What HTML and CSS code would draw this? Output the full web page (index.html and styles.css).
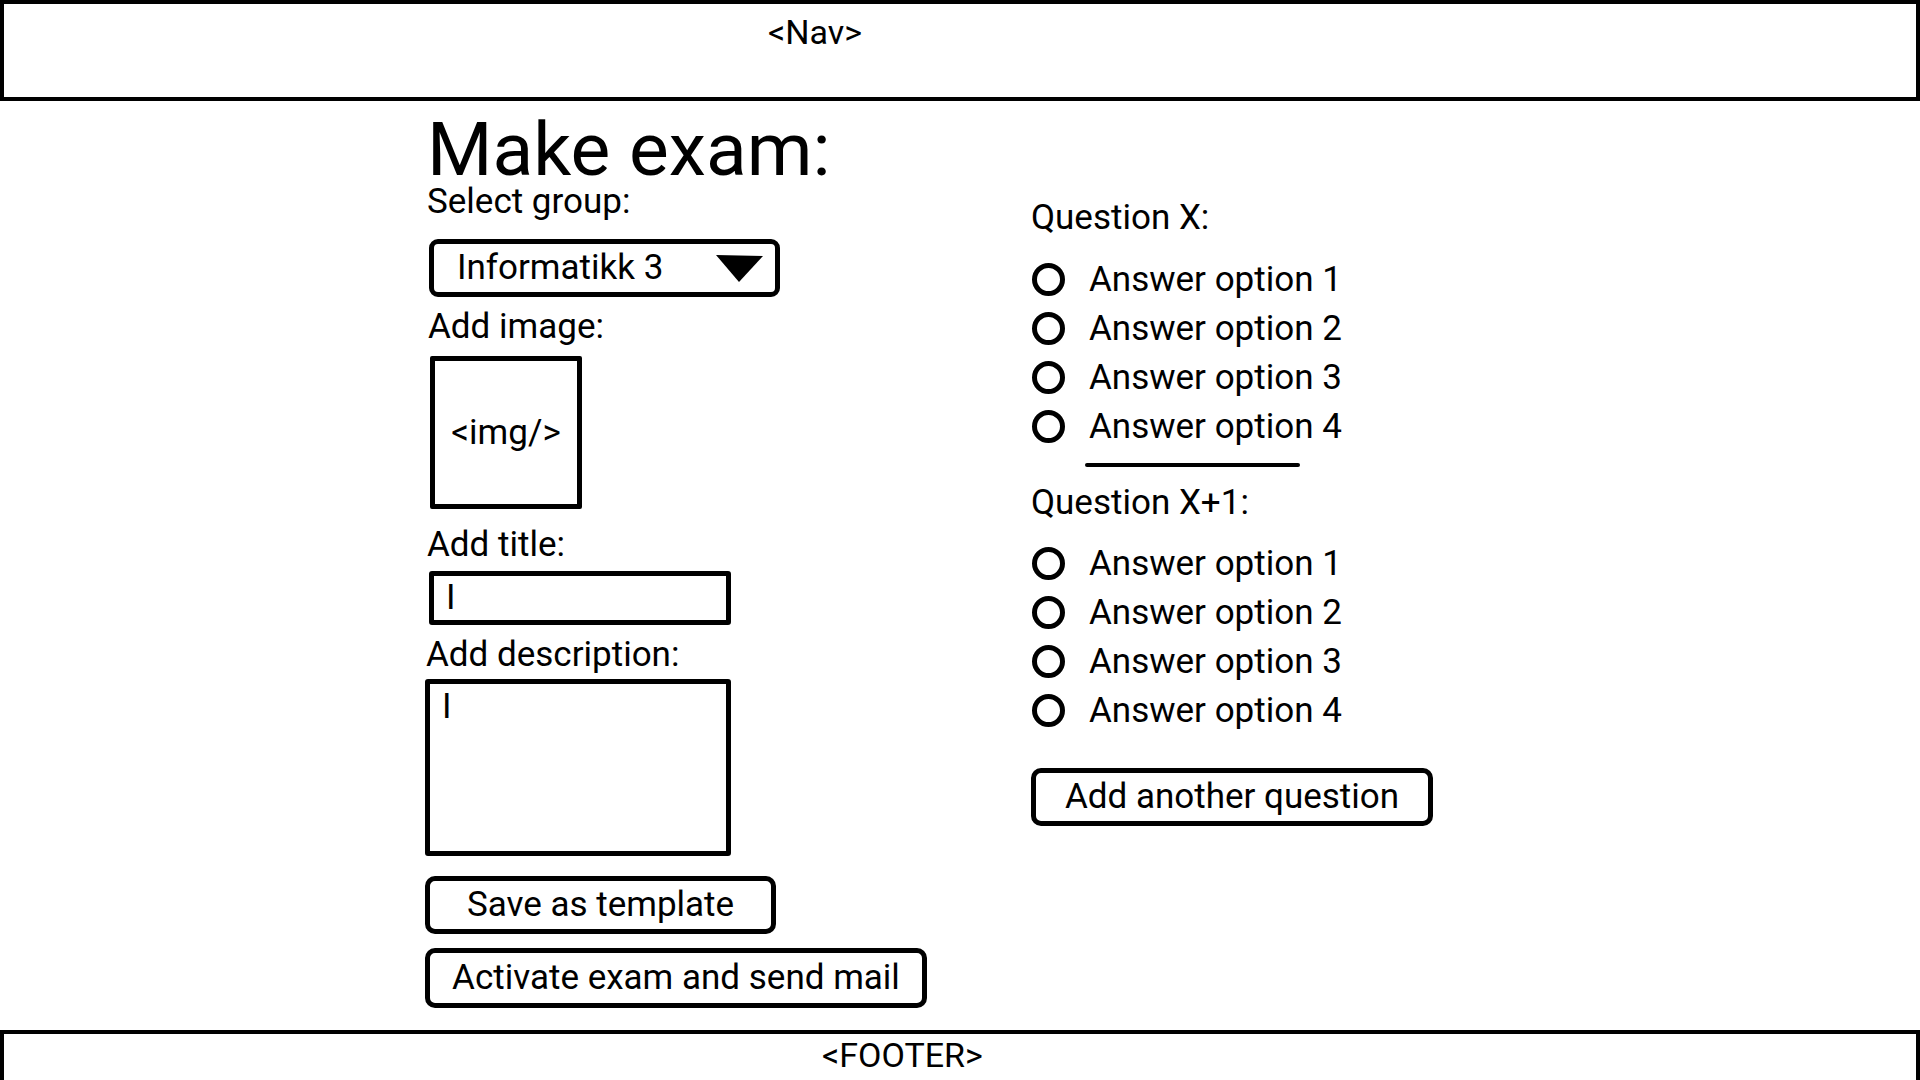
FILE: index.html
```html
<!DOCTYPE html>
<html lang="en">
<head>
<meta charset="utf-8">
<title>Make exam</title>
<link rel="stylesheet" href="styles.css">
</head>
<body>
<header class="nav"><span class="nav-label">&lt;Nav&gt;</span></header>
<main class="page">
  <section class="col-left">
    <h1 class="title">Make exam:</h1>
    <label class="label">Select group:</label>
    <div class="select">
      <span class="select-value">Informatikk 3</span>
      <svg class="caret" width="48" height="27" viewBox="0 0 48 27"><polygon points="0,0 47,1 23,27" fill="#000"/></svg>
    </div>
    <label class="label label-image">Add image:</label>
    <div class="image-box">&lt;img/&gt;</div>
    <label class="label label-title">Add title:</label>
    <div class="input"><span class="cursor">I</span></div>
    <label class="label label-desc">Add description:</label>
    <div class="textarea"><span class="cursor">I</span></div>
    <button class="btn btn-save">Save as template</button>
    <button class="btn btn-activate">Activate exam and send mail</button>
  </section>
  <section class="col-right">
    <div class="q-label">Question X:</div>
    <ul class="options">
      <li class="option"><span class="radio"></span><span>Answer option 1</span></li>
      <li class="option"><span class="radio"></span><span>Answer option 2</span></li>
      <li class="option"><span class="radio"></span><span>Answer option 3</span></li>
      <li class="option"><span class="radio"></span><span>Answer option 4</span></li>
    </ul>
    <div class="divider"></div>
    <div class="q-label q-label-next">Question X+1:</div>
    <ul class="options options-next">
      <li class="option"><span class="radio"></span><span>Answer option 1</span></li>
      <li class="option"><span class="radio"></span><span>Answer option 2</span></li>
      <li class="option"><span class="radio"></span><span>Answer option 3</span></li>
      <li class="option"><span class="radio"></span><span>Answer option 4</span></li>
    </ul>
    <button class="btn btn-add">Add another question</button>
  </section>
</main>
<footer class="footer"><span class="footer-label">&lt;FOOTER&gt;</span></footer>
</body>
</html>
```
FILE: styles.css
```css
* { box-sizing: border-box; }
html, body { margin: 0; padding: 0; background: #fff; }
body {
  font-family: Roboto, "Noto Sans", Arial, sans-serif;
  font-size: 35px;
  line-height: 34px;
  color: #000;
  overflow: hidden;
}

.nav {
  height: 101px;
  border: 4px solid #000;
  padding: 8px 0 0 764px;
  font-size: 34px;
  line-height: 40px;
}

.page {
  display: flex;
  align-items: flex-start;
  padding: 18px 0 22px 427px;
}

.col-left {
  width: 604px;
  display: flex;
  flex-direction: column;
  align-items: flex-start;
}

.title {
  margin: 0 0 6px 0;
  font-size: 75px;
  font-weight: 400;
  line-height: 60px;
  height: 60px;
}

.label { display: block; line-height: 34px; height: 34px; }
.label-image { margin-top: 13px; margin-left: 1px; }
.label-title { margin-top: 19px; }
.label-desc { margin-top: 13px; margin-left: -1px; }

.select {
  margin-top: 20px;
  margin-left: 2px;
  width: 351px;
  height: 58px;
  border: 5px solid #000;
  border-radius: 9px;
  display: flex;
  align-items: center;
  justify-content: space-between;
  padding: 0 11px 0 23px;
}
.caret { display: block; }

.image-box {
  margin-top: 12px;
  margin-left: 3px;
  width: 152px;
  height: 153px;
  border: 5px solid #000;
  border-radius: 2px;
  display: flex;
  align-items: center;
  justify-content: center;
}

.input {
  margin-top: 9px;
  margin-left: 2px;
  width: 302px;
  height: 54px;
  border: 5px solid #000;
  border-radius: 3px;
  padding: 2px 0 0 12px;
  line-height: 40px;
}

.textarea {
  margin-top: 7px;
  margin-left: -2px;
  width: 306px;
  height: 177px;
  border: 5px solid #000;
  border-radius: 3px;
  padding: 3px 0 0 12px;
  line-height: 40px;
}

.btn {
  font-family: inherit;
  font-size: 35px;
  line-height: 34px;
  color: #000;
  background: #fff;
  border: 5px solid #000;
  border-radius: 10px;
  padding: 0;
  display: flex;
  align-items: center;
  justify-content: center;
}
.btn-save { margin-top: 20px; margin-left: -2px; width: 351px; height: 58px; }
.btn-activate { margin-top: 14px; margin-left: -2px; width: 502px; height: 60px; }

.col-right {
  padding-top: 82px;
  display: flex;
  flex-direction: column;
  align-items: flex-start;
}

.q-label { line-height: 34px; height: 34px; }
.q-label-next { margin-top: 19px; }

.options { list-style: none; margin: 20px 0 0; padding: 0; }
.options-next { margin-top: 19px; }
.option {
  height: 49px;
  display: flex;
  align-items: center;
  gap: 24px;
}
.radio {
  width: 33px;
  height: 33px;
  border: 5px solid #000;
  border-radius: 50%;
  margin-left: 1px;
  flex: none;
}

.divider {
  margin: 12px 0 0 54px;
  width: 215px;
  height: 4px;
  border-radius: 2px;
  background: #000;
}

.btn-add { margin-top: 33px; width: 402px; height: 58px; }

.footer {
  height: 51px;
  border: 4px solid #000;
  border-bottom: none;
  padding: 1px 0 0 818px;
  font-size: 34px;
  line-height: 40px;
}
```
